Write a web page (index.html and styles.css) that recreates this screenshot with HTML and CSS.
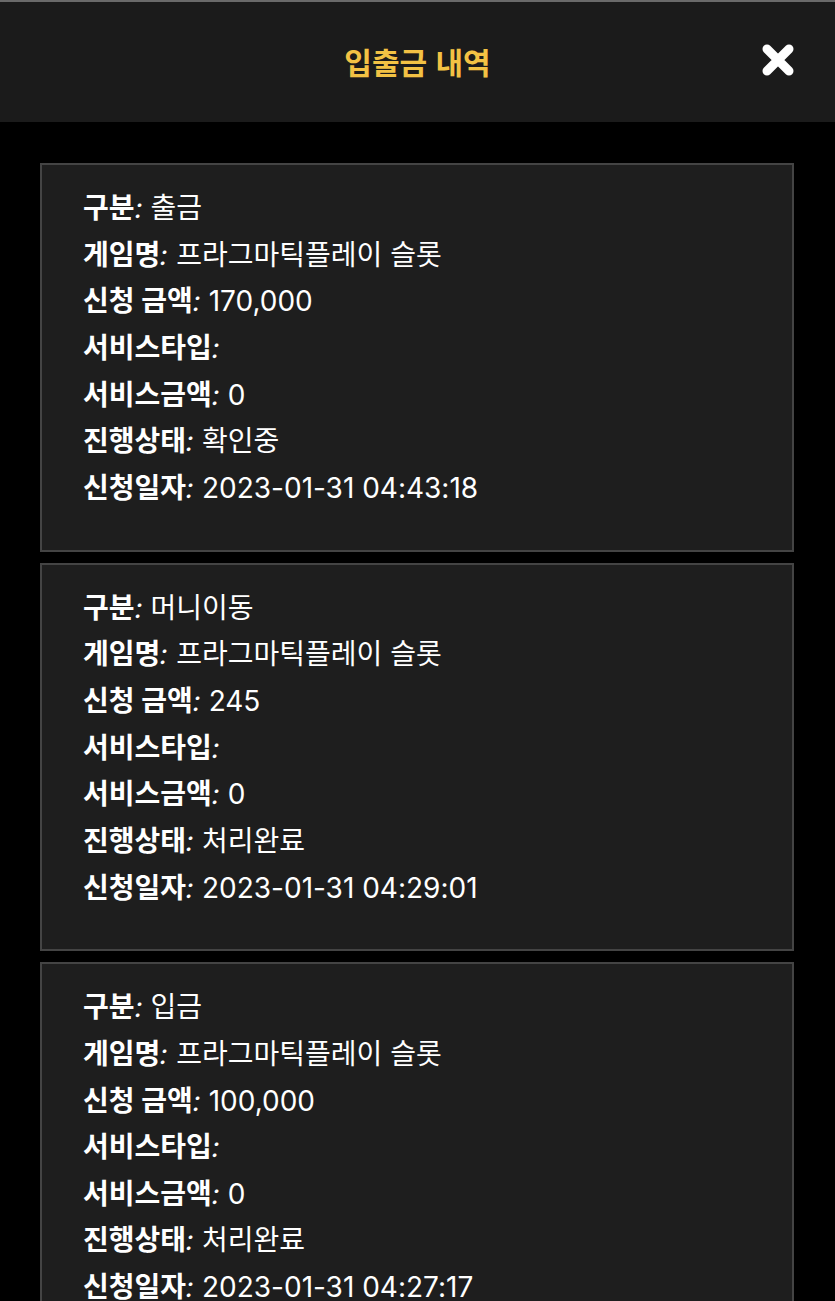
FILE: index.html
```html
<!DOCTYPE html>
<html lang="ko">
<head>
<meta charset="utf-8">
<title>입출금 내역</title>
<link rel="stylesheet" href="styles.css">
</head>
<body>
<header class="topbar">
  <h1 class="title">입출금 내역</h1>
  <button class="close" aria-label="닫기">
    <svg width="34" height="34" viewBox="0 0 34 34"><path d="M6 6 L28 28 M28 6 L6 28" stroke="#fff" stroke-width="9" stroke-linecap="round" fill="none"/></svg>
  </button>
</header>
<main class="list">
  <section class="card">
    <p><b>구분</b><i>:</i> 출금</p>
    <p><b>게임명</b><i>:</i> 프라그마틱플레이 슬롯</p>
    <p><b>신청 금액</b><i>:</i> 170,000</p>
    <p><b>서비스타입</b><i>:</i></p>
    <p><b>서비스금액</b><i>:</i> 0</p>
    <p><b>진행상태</b><i>:</i> 확인중</p>
    <p><b>신청일자</b><i>:</i> 2023-01-31 04:43:18</p>
  </section>
  <section class="card">
    <p><b>구분</b><i>:</i> 머니이동</p>
    <p><b>게임명</b><i>:</i> 프라그마틱플레이 슬롯</p>
    <p><b>신청 금액</b><i>:</i> 245</p>
    <p><b>서비스타입</b><i>:</i></p>
    <p><b>서비스금액</b><i>:</i> 0</p>
    <p><b>진행상태</b><i>:</i> 처리완료</p>
    <p><b>신청일자</b><i>:</i> 2023-01-31 04:29:01</p>
  </section>
  <section class="card">
    <p><b>구분</b><i>:</i> 입금</p>
    <p><b>게임명</b><i>:</i> 프라그마틱플레이 슬롯</p>
    <p><b>신청 금액</b><i>:</i> 100,000</p>
    <p><b>서비스타입</b><i>:</i></p>
    <p><b>서비스금액</b><i>:</i> 0</p>
    <p><b>진행상태</b><i>:</i> 처리완료</p>
    <p><b>신청일자</b><i>:</i> 2023-01-31 04:27:17</p>
  </section>
</main>
</body>
</html>
```
FILE: styles.css
```css
html, body {
  margin: 0;
  padding: 0;
  background: #000;
}
body {
  font-family: Inter, "Noto Sans CJK KR", "Noto Sans", sans-serif;
  color: #fff;
}
.topbar {
  position: relative;
  height: 120px;
  border-top: 2px solid #6a6a6a;
  background: #1b1b1b;
  display: flex;
  align-items: center;
  justify-content: center;
}
.title {
  margin: 0;
  font-family: "Noto Sans CJK KR", sans-serif;
  font-size: 30px;
  font-weight: 700;
  color: #f3c244;
  line-height: 1;
  margin-top: -2px;
}
.close {
  position: absolute;
  right: 40px;
  top: 41px;
  width: 34px;
  height: 34px;
  padding: 0;
  border: 0;
  background: none;
  display: block;
}
.close svg { display: block; }
.list {
  padding: 41px 41px 0 40px;
  display: flex;
  flex-direction: column;
  gap: 11px;
}
.card {
  background: #1e1e1e;
  border: 2px solid #444;
  padding: 20px 40px 38px 41px;
}
.card p {
  margin: 0;
  font-size: 28px;
  height: 46.67px;
  line-height: 46.67px;
  white-space: nowrap;
}
.card b {
  font-weight: 700;
}
.card i {
  display: inline-block;
  font-style: normal;
  font-weight: 400;
  transform: skewX(-10deg);
}
```
